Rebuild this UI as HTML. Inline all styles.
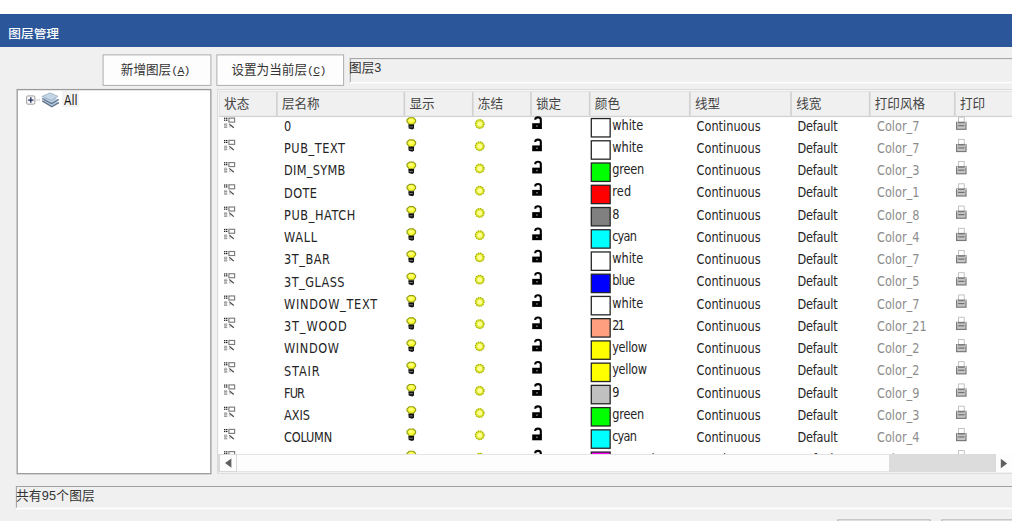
<!DOCTYPE html><html lang="zh-CN"><head><meta charset="utf-8"><title>图层管理</title><style>
*{box-sizing:border-box;margin:0;padding:0}
html,body{width:1012px;height:521px;overflow:hidden;background:#fff}
body{position:relative;font-family:"DejaVu Sans Condensed","Liberation Sans","Noto Sans CJK SC",sans-serif;font-size:12.6px;color:#000}
.abs{position:absolute}
.cjk{font-family:"Liberation Sans","Noto Sans CJK SC",sans-serif}
#client{left:0;top:46.6px;width:1012px;height:475px;background:#f0f0f0}
#title{left:0;top:14px;width:1012px;height:32.6px;background:#2b579a}
#title span{position:absolute;left:8.3px;top:1.1px;line-height:38.5px;color:#fff;font-size:12.7px;font-weight:500;white-space:nowrap;transform:scaleY(0.93);transform-origin:0 50%}
.btn{color:#333;text-align:center;white-space:nowrap;font-size:12.6px}
.btn .m{font-family:"Liberation Mono","DejaVu Sans Mono",monospace;font-size:11.6px;letter-spacing:-0.75px;margin-right:0.75px}
.sunk{white-space:nowrap;color:#333;padding:1px 0 0 1px}
.panel{background:#fff;border:1.2px solid #9c9c9c}
.hd{position:absolute;top:-1px;height:24.8px;line-height:27.4px;font-size:12.6px;color:#444;white-space:nowrap;padding-left:5px}
.row{position:absolute;left:0;width:900px;height:22.235px}
.c{position:absolute;top:-1px;line-height:22.22px;white-space:nowrap;font-size:12.6px;color:#242424;transform:scaleY(1.06);transform-origin:0 50%}
.c.lc{transform:scaleY(1.05);transform-origin:0 68%;top:-1.1px}
.c.hi{top:-2.1px}
.sw{position:absolute;left:372px;transform:translateX(0.65px);top:1.3px;width:20.1px;height:19.7px;border:1.2px solid #2a2a2a}
.ico{position:absolute;overflow:visible}
</style></head><body>
<div id="title" class="abs cjk"><span>图层管理</span></div>
<div id="client" class="abs"></div>
<svg class="abs" style="left:0;top:0" width="1012" height="521" viewBox="0 0 1012 521"><rect x="103.1" y="54.9" width="107.80" height="30.50" fill="#fdfdfd" stroke="#adadad" stroke-width="1"/><rect x="216.9" y="54.9" width="126.70" height="30.50" fill="#fdfdfd" stroke="#adadad" stroke-width="1"/><rect x="17.2" y="89.6" width="193.65" height="384.10" fill="#fff" stroke="#9b9b9b" stroke-width="1.3"/><rect x="217.7" y="89.7" width="812.30" height="383.50" fill="#fff" stroke="#d4d4d4" stroke-width="1"/><path d="M349.8 58.6L1012 58.6" stroke="#a0a0a0" stroke-width="1"/><path d="M350.3 58.1L350.3 83.1" stroke="#a0a0a0" stroke-width="1"/><path d="M349.8 82.7L1012 82.7" stroke="#fff" stroke-width="1.2"/><path d="M15.9 486.5L1012 486.5" stroke="#a0a0a0" stroke-width="1"/><path d="M16.4 486L16.4 509" stroke="#a0a0a0" stroke-width="1"/><path d="M15.9 508.5L1012 508.5" stroke="#fff" stroke-width="1.3"/><rect x="837.9" y="519.9" width="92.20" height="32.10" fill="#fdfdfd" stroke="#adadad" stroke-width="1"/><rect x="941.9" y="519.9" width="98.10" height="32.10" fill="#fdfdfd" stroke="#adadad" stroke-width="1"/></svg>
<div class="abs btn cjk" style="left:102.6px;top:54.6px;width:108.6px;height:31.6px;line-height:31px;padding-right:2.4px">新增图层<span class="m">(<u>A</u>)</span></div>
<div class="abs btn cjk" style="left:216.4px;top:54.6px;width:127.4px;height:31.6px;line-height:31px;padding-right:2.4px">设置为当前层<span class="m">(<u>C</u>)</span></div>
<div class="abs sunk cjk" style="left:349.8px;top:58.2px;width:700px;height:24.8px;line-height:19.3px;font-size:12.6px;padding-left:0px;text-indent:-0.7px">图层3</div>
<svg class="abs" style="left:25px;top:92px" width="37" height="17" viewBox="0 0 37 17"><rect x="1.6" y="3.9" width="8.3" height="8.3" rx="1.2" fill="#f6f6f8" stroke="#9c9c9c" stroke-width="0.95"/><path d="M3.1 8.05H8.5M5.8 5.35V10.75" stroke="#222e5c" stroke-width="1.35"/><path d="M11.6 8H15.2" stroke="#9a9a9a" stroke-width="1" stroke-dasharray="1 1"/><path d="M17.2 8.9 L25.2 5.6 L33.9 10.4 L26.8 14.7Z" fill="#b7cbdf"/><path d="M17.2 8.9 L26.8 14.7 L33.9 10.6" fill="none" stroke="#5d7187" stroke-width="1.3" stroke-linejoin="round"/><path d="M17.2 6.4 L25.2 2.8 L33.9 7.4 L26.5 11.6Z" fill="#bccfe2" stroke="#fff" stroke-width="0.5"/><path d="M17.2 6.5 L26.5 11.6 L33.9 7.5" fill="none" stroke="#61758b" stroke-width="1.3" stroke-linejoin="round"/><path d="M16.8 4.6 L24.9 0.9 L32.9 4.3 L26.4 8.3Z" fill="#c4d5e6" stroke="#8ea4bb" stroke-width="0.7" stroke-linejoin="round"/></svg>
<div class="abs" style="left:61.7px;top:91.2px;width:17.8px;height:16.2px;background:#f2f2f2"></div>
<div class="abs" style="left:63.6px;top:89.2px;line-height:21px;font-size:12.6px;color:#111;transform:scale(0.96,1.14);transform-origin:0 50%">All</div>
<div class="abs" id="tbl" style="left:218.0px;top:90.5px;width:794px;height:363.7px;overflow:hidden">
<div class="abs cjk" style="left:1.2px;top:0.6px;width:900px;height:25.9px;background:#f0f0f0;border-top:1px solid #e3e3e3;border-left:1px solid #e3e3e3">
<div class="hd" style="left:0.0px;width:57.2px;padding-left:3.9px">状态</div>
<div class="hd" style="left:57.2px;width:127.5px;padding-left:4.5px">层名称</div>
<div class="hd" style="left:184.8px;width:68.4px;padding-left:4.5px">显示</div>
<div class="hd" style="left:253.1px;width:58.2px;padding-left:4.5px">冻结</div>
<div class="hd" style="left:311.3px;width:58.7px;padding-left:4.5px">锁定</div>
<div class="hd" style="left:370.1px;width:100.2px;padding-left:4.5px">颜色</div>
<div class="hd" style="left:470.2px;width:101.2px;padding-left:4.5px">线型</div>
<div class="hd" style="left:571.5px;width:78.6px;padding-left:4.5px">线宽</div>
<div class="hd" style="left:650.0px;width:85.1px;padding-left:4.5px">打印风格</div>
<div class="hd" style="left:735.2px;width:145.3px;padding-left:4.5px">打印</div>
</div>
<svg class="abs" style="left:0;top:0" width="794" height="28" viewBox="0 0 794 28"><rect x="1.20" y="24.75" width="800" height="1.35" fill="#d3d3d3"/><rect x="58.05" y="1.10" width="1.6" height="23.70" fill="#d0d0d0"/><rect x="185.55" y="1.10" width="1.6" height="23.70" fill="#d0d0d0"/><rect x="253.95" y="1.10" width="1.6" height="23.70" fill="#d0d0d0"/><rect x="312.15" y="1.10" width="1.6" height="23.70" fill="#d0d0d0"/><rect x="370.85" y="1.10" width="1.6" height="23.70" fill="#d0d0d0"/><rect x="471.05" y="1.10" width="1.6" height="23.70" fill="#d0d0d0"/><rect x="572.25" y="1.10" width="1.6" height="23.70" fill="#d0d0d0"/><rect x="650.85" y="1.10" width="1.6" height="23.70" fill="#d0d0d0"/><rect x="735.95" y="1.10" width="1.6" height="23.70" fill="#d0d0d0"/></svg>
<div class="row" style="top:25.5px;transform:translateY(0.70px)">
<svg class="ico" style="left:6px;top:1.2px" width="12" height="11" viewBox="0 0 12 11"><rect x="0" y="0" width="1.4" height="1.2" fill="#222"/><rect x="2" y="0" width="1.4" height="1.2" fill="#222"/><rect x="0" y="1.9" width="1.4" height="1.2" fill="#222"/><rect x="2" y="1.9" width="1.4" height="1.2" fill="#222"/><rect x="4.9" y="0.4" width="5.7" height="4" fill="#fff" stroke="#7c7c7c" stroke-width="1.15"/><rect x="0" y="5.4" width="3.2" height="4.9" fill="#c6c6c6"/><rect x="0" y="6.6" width="3.2" height="1" fill="#9c9c9c"/><rect x="0" y="9.2" width="3.2" height="1" fill="#9c9c9c"/><path d="M5.2 6.2 L9.8 10" stroke="#4a4a4a" stroke-width="1.25" fill="none"/><path d="M5 6 L7 9.8 L5 9.8Z" fill="#ccc"/></svg><svg class="ico" style="left:187.5px;top:-0.4px" width="12" height="14" viewBox="0 0 12 14"><path d="M3.4 1.0 L7.4 1.0 L9.6 3.1 L9.6 4.9 L7.4 7.6 L3.3 7.6 L1 4.9 L1 3.1Z" fill="#fbfb34" stroke="#929e14" stroke-width="1.15" stroke-linejoin="round"/><ellipse cx="5" cy="3.6" rx="2.3" ry="1.4" fill="#ffff7c"/><path d="M2.3 7.9 L8.1 7.9 L8.0 11.9 L6.2 12.9 L2.7 11.9Z" fill="#141414"/><rect x="3.4" y="9.8" width="3.4" height="0.8" fill="#8c8c8c"/></svg><svg class="ico" style="left:256.2px;top:1.5px" width="12" height="12" viewBox="0 0 12 12"><circle cx="5.7" cy="5.3" r="4.7" fill="#dde626"/><circle cx="5.7" cy="5.3" r="4.3" fill="none" stroke="#9aa51c" stroke-width="1.2" stroke-dasharray="1.1 1.15"/><circle cx="5.7" cy="5.3" r="2.5" fill="#ffff96"/></svg><svg class="ico" style="left:314px;top:-1.0px" width="11" height="14" viewBox="0 0 11 14"><path d="M3.3 4.1 L3.3 3.4 C3.5 1.1, 8.5 0.9, 8.8 3.8 L8.8 8" stroke="#000" stroke-width="2.1" fill="none"/><rect x="0.2" y="7.5" width="9.7" height="5.8" fill="#000"/><rect x="4.2" y="9.6" width="1.5" height="1.5" fill="#8a8a8a"/></svg>
<div class="c" style="left:66px">0</div>
<svg class="ico" style="left:372px;top:0" width="22" height="22" viewBox="0 0 22 22"><rect x="1.3" y="1.85" width="18.85" height="18.4" fill="#ffffff" stroke="#262626" stroke-width="1.3"/></svg>
<div class="c lc hi" style="left:394.2px">white</div>
<div class="c lc" style="left:478.6px">Continuous</div>
<div class="c lc" style="left:579.6px;letter-spacing:-0.22px">Default</div>
<div class="c lc" style="left:659px;color:#8c8c8c">Color_7</div>
<svg class="ico" style="left:738px;top:0.3px" width="12" height="14" viewBox="0 0 12 14"><rect x="2.6" y="0.4" width="5.6" height="5.4" fill="#fff" stroke="#b4b4b4" stroke-width="0.8"/><rect x="0" y="5.0" width="10.6" height="8.2" fill="#7a7a7a"/><rect x="1.2" y="6.6" width="8.2" height="5.4" fill="#c6c6c6"/><rect x="2.2" y="8.4" width="6.2" height="1.2" fill="#6e6e6e"/><rect x="0.9" y="5.6" width="1" height="1" fill="#fff"/><rect x="8.8" y="5.6" width="1" height="1" fill="#fff"/></svg>
</div>
<div class="row" style="top:47.5px;transform:translateY(0.94px)">
<svg class="ico" style="left:6px;top:1.2px" width="12" height="11" viewBox="0 0 12 11"><rect x="0" y="0" width="1.4" height="1.2" fill="#222"/><rect x="2" y="0" width="1.4" height="1.2" fill="#222"/><rect x="0" y="1.9" width="1.4" height="1.2" fill="#222"/><rect x="2" y="1.9" width="1.4" height="1.2" fill="#222"/><rect x="4.9" y="0.4" width="5.7" height="4" fill="#fff" stroke="#7c7c7c" stroke-width="1.15"/><rect x="0" y="5.4" width="3.2" height="4.9" fill="#c6c6c6"/><rect x="0" y="6.6" width="3.2" height="1" fill="#9c9c9c"/><rect x="0" y="9.2" width="3.2" height="1" fill="#9c9c9c"/><path d="M5.2 6.2 L9.8 10" stroke="#4a4a4a" stroke-width="1.25" fill="none"/><path d="M5 6 L7 9.8 L5 9.8Z" fill="#ccc"/></svg><svg class="ico" style="left:187.5px;top:-0.4px" width="12" height="14" viewBox="0 0 12 14"><path d="M3.4 1.0 L7.4 1.0 L9.6 3.1 L9.6 4.9 L7.4 7.6 L3.3 7.6 L1 4.9 L1 3.1Z" fill="#fbfb34" stroke="#929e14" stroke-width="1.15" stroke-linejoin="round"/><ellipse cx="5" cy="3.6" rx="2.3" ry="1.4" fill="#ffff7c"/><path d="M2.3 7.9 L8.1 7.9 L8.0 11.9 L6.2 12.9 L2.7 11.9Z" fill="#141414"/><rect x="3.4" y="9.8" width="3.4" height="0.8" fill="#8c8c8c"/></svg><svg class="ico" style="left:256.2px;top:1.5px" width="12" height="12" viewBox="0 0 12 12"><circle cx="5.7" cy="5.3" r="4.7" fill="#dde626"/><circle cx="5.7" cy="5.3" r="4.3" fill="none" stroke="#9aa51c" stroke-width="1.2" stroke-dasharray="1.1 1.15"/><circle cx="5.7" cy="5.3" r="2.5" fill="#ffff96"/></svg><svg class="ico" style="left:314px;top:-1.0px" width="11" height="14" viewBox="0 0 11 14"><path d="M3.3 4.1 L3.3 3.4 C3.5 1.1, 8.5 0.9, 8.8 3.8 L8.8 8" stroke="#000" stroke-width="2.1" fill="none"/><rect x="0.2" y="7.5" width="9.7" height="5.8" fill="#000"/><rect x="4.2" y="9.6" width="1.5" height="1.5" fill="#8a8a8a"/></svg>
<div class="c" style="left:66px;letter-spacing:0.54px">PUB_TEXT</div>
<svg class="ico" style="left:372px;top:0" width="22" height="22" viewBox="0 0 22 22"><rect x="1.3" y="1.85" width="18.85" height="18.4" fill="#ffffff" stroke="#262626" stroke-width="1.3"/></svg>
<div class="c lc hi" style="left:394.2px">white</div>
<div class="c lc" style="left:478.6px">Continuous</div>
<div class="c lc" style="left:579.6px;letter-spacing:-0.22px">Default</div>
<div class="c lc" style="left:659px;color:#8c8c8c">Color_7</div>
<svg class="ico" style="left:738px;top:0.3px" width="12" height="14" viewBox="0 0 12 14"><rect x="2.6" y="0.4" width="5.6" height="5.4" fill="#fff" stroke="#b4b4b4" stroke-width="0.8"/><rect x="0" y="5.0" width="10.6" height="8.2" fill="#7a7a7a"/><rect x="1.2" y="6.6" width="8.2" height="5.4" fill="#c6c6c6"/><rect x="2.2" y="8.4" width="6.2" height="1.2" fill="#6e6e6e"/><rect x="0.9" y="5.6" width="1" height="1" fill="#fff"/><rect x="8.8" y="5.6" width="1" height="1" fill="#fff"/></svg>
</div>
<div class="row" style="top:70.5px;transform:translateY(0.17px)">
<svg class="ico" style="left:6px;top:1.2px" width="12" height="11" viewBox="0 0 12 11"><rect x="0" y="0" width="1.4" height="1.2" fill="#222"/><rect x="2" y="0" width="1.4" height="1.2" fill="#222"/><rect x="0" y="1.9" width="1.4" height="1.2" fill="#222"/><rect x="2" y="1.9" width="1.4" height="1.2" fill="#222"/><rect x="4.9" y="0.4" width="5.7" height="4" fill="#fff" stroke="#7c7c7c" stroke-width="1.15"/><rect x="0" y="5.4" width="3.2" height="4.9" fill="#c6c6c6"/><rect x="0" y="6.6" width="3.2" height="1" fill="#9c9c9c"/><rect x="0" y="9.2" width="3.2" height="1" fill="#9c9c9c"/><path d="M5.2 6.2 L9.8 10" stroke="#4a4a4a" stroke-width="1.25" fill="none"/><path d="M5 6 L7 9.8 L5 9.8Z" fill="#ccc"/></svg><svg class="ico" style="left:187.5px;top:-0.4px" width="12" height="14" viewBox="0 0 12 14"><path d="M3.4 1.0 L7.4 1.0 L9.6 3.1 L9.6 4.9 L7.4 7.6 L3.3 7.6 L1 4.9 L1 3.1Z" fill="#fbfb34" stroke="#929e14" stroke-width="1.15" stroke-linejoin="round"/><ellipse cx="5" cy="3.6" rx="2.3" ry="1.4" fill="#ffff7c"/><path d="M2.3 7.9 L8.1 7.9 L8.0 11.9 L6.2 12.9 L2.7 11.9Z" fill="#141414"/><rect x="3.4" y="9.8" width="3.4" height="0.8" fill="#8c8c8c"/></svg><svg class="ico" style="left:256.2px;top:1.5px" width="12" height="12" viewBox="0 0 12 12"><circle cx="5.7" cy="5.3" r="4.7" fill="#dde626"/><circle cx="5.7" cy="5.3" r="4.3" fill="none" stroke="#9aa51c" stroke-width="1.2" stroke-dasharray="1.1 1.15"/><circle cx="5.7" cy="5.3" r="2.5" fill="#ffff96"/></svg><svg class="ico" style="left:314px;top:-1.0px" width="11" height="14" viewBox="0 0 11 14"><path d="M3.3 4.1 L3.3 3.4 C3.5 1.1, 8.5 0.9, 8.8 3.8 L8.8 8" stroke="#000" stroke-width="2.1" fill="none"/><rect x="0.2" y="7.5" width="9.7" height="5.8" fill="#000"/><rect x="4.2" y="9.6" width="1.5" height="1.5" fill="#8a8a8a"/></svg>
<div class="c" style="left:66px;letter-spacing:0.31px">DIM_SYMB</div>
<svg class="ico" style="left:372px;top:0" width="22" height="22" viewBox="0 0 22 22"><rect x="1.3" y="1.85" width="18.85" height="18.4" fill="#00ff00" stroke="#262626" stroke-width="1.3"/></svg>
<div class="c lc hi" style="left:394.2px;letter-spacing:-0.18px">green</div>
<div class="c lc" style="left:478.6px">Continuous</div>
<div class="c lc" style="left:579.6px;letter-spacing:-0.22px">Default</div>
<div class="c lc" style="left:659px;color:#8c8c8c">Color_3</div>
<svg class="ico" style="left:738px;top:0.3px" width="12" height="14" viewBox="0 0 12 14"><rect x="2.6" y="0.4" width="5.6" height="5.4" fill="#fff" stroke="#b4b4b4" stroke-width="0.8"/><rect x="0" y="5.0" width="10.6" height="8.2" fill="#7a7a7a"/><rect x="1.2" y="6.6" width="8.2" height="5.4" fill="#c6c6c6"/><rect x="2.2" y="8.4" width="6.2" height="1.2" fill="#6e6e6e"/><rect x="0.9" y="5.6" width="1" height="1" fill="#fff"/><rect x="8.8" y="5.6" width="1" height="1" fill="#fff"/></svg>
</div>
<div class="row" style="top:92.5px;transform:translateY(0.41px)">
<svg class="ico" style="left:6px;top:1.2px" width="12" height="11" viewBox="0 0 12 11"><rect x="0" y="0" width="1.4" height="1.2" fill="#222"/><rect x="2" y="0" width="1.4" height="1.2" fill="#222"/><rect x="0" y="1.9" width="1.4" height="1.2" fill="#222"/><rect x="2" y="1.9" width="1.4" height="1.2" fill="#222"/><rect x="4.9" y="0.4" width="5.7" height="4" fill="#fff" stroke="#7c7c7c" stroke-width="1.15"/><rect x="0" y="5.4" width="3.2" height="4.9" fill="#c6c6c6"/><rect x="0" y="6.6" width="3.2" height="1" fill="#9c9c9c"/><rect x="0" y="9.2" width="3.2" height="1" fill="#9c9c9c"/><path d="M5.2 6.2 L9.8 10" stroke="#4a4a4a" stroke-width="1.25" fill="none"/><path d="M5 6 L7 9.8 L5 9.8Z" fill="#ccc"/></svg><svg class="ico" style="left:187.5px;top:-0.4px" width="12" height="14" viewBox="0 0 12 14"><path d="M3.4 1.0 L7.4 1.0 L9.6 3.1 L9.6 4.9 L7.4 7.6 L3.3 7.6 L1 4.9 L1 3.1Z" fill="#fbfb34" stroke="#929e14" stroke-width="1.15" stroke-linejoin="round"/><ellipse cx="5" cy="3.6" rx="2.3" ry="1.4" fill="#ffff7c"/><path d="M2.3 7.9 L8.1 7.9 L8.0 11.9 L6.2 12.9 L2.7 11.9Z" fill="#141414"/><rect x="3.4" y="9.8" width="3.4" height="0.8" fill="#8c8c8c"/></svg><svg class="ico" style="left:256.2px;top:1.5px" width="12" height="12" viewBox="0 0 12 12"><circle cx="5.7" cy="5.3" r="4.7" fill="#dde626"/><circle cx="5.7" cy="5.3" r="4.3" fill="none" stroke="#9aa51c" stroke-width="1.2" stroke-dasharray="1.1 1.15"/><circle cx="5.7" cy="5.3" r="2.5" fill="#ffff96"/></svg><svg class="ico" style="left:314px;top:-1.0px" width="11" height="14" viewBox="0 0 11 14"><path d="M3.3 4.1 L3.3 3.4 C3.5 1.1, 8.5 0.9, 8.8 3.8 L8.8 8" stroke="#000" stroke-width="2.1" fill="none"/><rect x="0.2" y="7.5" width="9.7" height="5.8" fill="#000"/><rect x="4.2" y="9.6" width="1.5" height="1.5" fill="#8a8a8a"/></svg>
<div class="c" style="left:66px;letter-spacing:0.4px">DOTE</div>
<svg class="ico" style="left:372px;top:0" width="22" height="22" viewBox="0 0 22 22"><rect x="1.3" y="1.85" width="18.85" height="18.4" fill="#ff0000" stroke="#262626" stroke-width="1.3"/></svg>
<div class="c lc hi" style="left:394.2px;letter-spacing:0.25px">red</div>
<div class="c lc" style="left:478.6px">Continuous</div>
<div class="c lc" style="left:579.6px;letter-spacing:-0.22px">Default</div>
<div class="c lc" style="left:659px;color:#8c8c8c">Color_1</div>
<svg class="ico" style="left:738px;top:0.3px" width="12" height="14" viewBox="0 0 12 14"><rect x="2.6" y="0.4" width="5.6" height="5.4" fill="#fff" stroke="#b4b4b4" stroke-width="0.8"/><rect x="0" y="5.0" width="10.6" height="8.2" fill="#7a7a7a"/><rect x="1.2" y="6.6" width="8.2" height="5.4" fill="#c6c6c6"/><rect x="2.2" y="8.4" width="6.2" height="1.2" fill="#6e6e6e"/><rect x="0.9" y="5.6" width="1" height="1" fill="#fff"/><rect x="8.8" y="5.6" width="1" height="1" fill="#fff"/></svg>
</div>
<div class="row" style="top:114.5px;transform:translateY(0.64px)">
<svg class="ico" style="left:6px;top:1.2px" width="12" height="11" viewBox="0 0 12 11"><rect x="0" y="0" width="1.4" height="1.2" fill="#222"/><rect x="2" y="0" width="1.4" height="1.2" fill="#222"/><rect x="0" y="1.9" width="1.4" height="1.2" fill="#222"/><rect x="2" y="1.9" width="1.4" height="1.2" fill="#222"/><rect x="4.9" y="0.4" width="5.7" height="4" fill="#fff" stroke="#7c7c7c" stroke-width="1.15"/><rect x="0" y="5.4" width="3.2" height="4.9" fill="#c6c6c6"/><rect x="0" y="6.6" width="3.2" height="1" fill="#9c9c9c"/><rect x="0" y="9.2" width="3.2" height="1" fill="#9c9c9c"/><path d="M5.2 6.2 L9.8 10" stroke="#4a4a4a" stroke-width="1.25" fill="none"/><path d="M5 6 L7 9.8 L5 9.8Z" fill="#ccc"/></svg><svg class="ico" style="left:187.5px;top:-0.4px" width="12" height="14" viewBox="0 0 12 14"><path d="M3.4 1.0 L7.4 1.0 L9.6 3.1 L9.6 4.9 L7.4 7.6 L3.3 7.6 L1 4.9 L1 3.1Z" fill="#fbfb34" stroke="#929e14" stroke-width="1.15" stroke-linejoin="round"/><ellipse cx="5" cy="3.6" rx="2.3" ry="1.4" fill="#ffff7c"/><path d="M2.3 7.9 L8.1 7.9 L8.0 11.9 L6.2 12.9 L2.7 11.9Z" fill="#141414"/><rect x="3.4" y="9.8" width="3.4" height="0.8" fill="#8c8c8c"/></svg><svg class="ico" style="left:256.2px;top:1.5px" width="12" height="12" viewBox="0 0 12 12"><circle cx="5.7" cy="5.3" r="4.7" fill="#dde626"/><circle cx="5.7" cy="5.3" r="4.3" fill="none" stroke="#9aa51c" stroke-width="1.2" stroke-dasharray="1.1 1.15"/><circle cx="5.7" cy="5.3" r="2.5" fill="#ffff96"/></svg><svg class="ico" style="left:314px;top:-1.0px" width="11" height="14" viewBox="0 0 11 14"><path d="M3.3 4.1 L3.3 3.4 C3.5 1.1, 8.5 0.9, 8.8 3.8 L8.8 8" stroke="#000" stroke-width="2.1" fill="none"/><rect x="0.2" y="7.5" width="9.7" height="5.8" fill="#000"/><rect x="4.2" y="9.6" width="1.5" height="1.5" fill="#8a8a8a"/></svg>
<div class="c" style="left:66px;letter-spacing:0.6px">PUB_HATCH</div>
<svg class="ico" style="left:372px;top:0" width="22" height="22" viewBox="0 0 22 22"><rect x="1.3" y="1.85" width="18.85" height="18.4" fill="#808080" stroke="#262626" stroke-width="1.3"/></svg>
<div class="c lc hi" style="left:394.2px">8</div>
<div class="c lc" style="left:478.6px">Continuous</div>
<div class="c lc" style="left:579.6px;letter-spacing:-0.22px">Default</div>
<div class="c lc" style="left:659px;color:#8c8c8c">Color_8</div>
<svg class="ico" style="left:738px;top:0.3px" width="12" height="14" viewBox="0 0 12 14"><rect x="2.6" y="0.4" width="5.6" height="5.4" fill="#fff" stroke="#b4b4b4" stroke-width="0.8"/><rect x="0" y="5.0" width="10.6" height="8.2" fill="#7a7a7a"/><rect x="1.2" y="6.6" width="8.2" height="5.4" fill="#c6c6c6"/><rect x="2.2" y="8.4" width="6.2" height="1.2" fill="#6e6e6e"/><rect x="0.9" y="5.6" width="1" height="1" fill="#fff"/><rect x="8.8" y="5.6" width="1" height="1" fill="#fff"/></svg>
</div>
<div class="row" style="top:136.5px;transform:translateY(0.88px)">
<svg class="ico" style="left:6px;top:1.2px" width="12" height="11" viewBox="0 0 12 11"><rect x="0" y="0" width="1.4" height="1.2" fill="#222"/><rect x="2" y="0" width="1.4" height="1.2" fill="#222"/><rect x="0" y="1.9" width="1.4" height="1.2" fill="#222"/><rect x="2" y="1.9" width="1.4" height="1.2" fill="#222"/><rect x="4.9" y="0.4" width="5.7" height="4" fill="#fff" stroke="#7c7c7c" stroke-width="1.15"/><rect x="0" y="5.4" width="3.2" height="4.9" fill="#c6c6c6"/><rect x="0" y="6.6" width="3.2" height="1" fill="#9c9c9c"/><rect x="0" y="9.2" width="3.2" height="1" fill="#9c9c9c"/><path d="M5.2 6.2 L9.8 10" stroke="#4a4a4a" stroke-width="1.25" fill="none"/><path d="M5 6 L7 9.8 L5 9.8Z" fill="#ccc"/></svg><svg class="ico" style="left:187.5px;top:-0.4px" width="12" height="14" viewBox="0 0 12 14"><path d="M3.4 1.0 L7.4 1.0 L9.6 3.1 L9.6 4.9 L7.4 7.6 L3.3 7.6 L1 4.9 L1 3.1Z" fill="#fbfb34" stroke="#929e14" stroke-width="1.15" stroke-linejoin="round"/><ellipse cx="5" cy="3.6" rx="2.3" ry="1.4" fill="#ffff7c"/><path d="M2.3 7.9 L8.1 7.9 L8.0 11.9 L6.2 12.9 L2.7 11.9Z" fill="#141414"/><rect x="3.4" y="9.8" width="3.4" height="0.8" fill="#8c8c8c"/></svg><svg class="ico" style="left:256.2px;top:1.5px" width="12" height="12" viewBox="0 0 12 12"><circle cx="5.7" cy="5.3" r="4.7" fill="#dde626"/><circle cx="5.7" cy="5.3" r="4.3" fill="none" stroke="#9aa51c" stroke-width="1.2" stroke-dasharray="1.1 1.15"/><circle cx="5.7" cy="5.3" r="2.5" fill="#ffff96"/></svg><svg class="ico" style="left:314px;top:-1.0px" width="11" height="14" viewBox="0 0 11 14"><path d="M3.3 4.1 L3.3 3.4 C3.5 1.1, 8.5 0.9, 8.8 3.8 L8.8 8" stroke="#000" stroke-width="2.1" fill="none"/><rect x="0.2" y="7.5" width="9.7" height="5.8" fill="#000"/><rect x="4.2" y="9.6" width="1.5" height="1.5" fill="#8a8a8a"/></svg>
<div class="c" style="left:66px;letter-spacing:0.73px">WALL</div>
<svg class="ico" style="left:372px;top:0" width="22" height="22" viewBox="0 0 22 22"><rect x="1.3" y="1.85" width="18.85" height="18.4" fill="#00ffff" stroke="#262626" stroke-width="1.3"/></svg>
<div class="c lc hi" style="left:394.2px;letter-spacing:-0.8px">cyan</div>
<div class="c lc" style="left:478.6px">Continuous</div>
<div class="c lc" style="left:579.6px;letter-spacing:-0.22px">Default</div>
<div class="c lc" style="left:659px;color:#8c8c8c">Color_4</div>
<svg class="ico" style="left:738px;top:0.3px" width="12" height="14" viewBox="0 0 12 14"><rect x="2.6" y="0.4" width="5.6" height="5.4" fill="#fff" stroke="#b4b4b4" stroke-width="0.8"/><rect x="0" y="5.0" width="10.6" height="8.2" fill="#7a7a7a"/><rect x="1.2" y="6.6" width="8.2" height="5.4" fill="#c6c6c6"/><rect x="2.2" y="8.4" width="6.2" height="1.2" fill="#6e6e6e"/><rect x="0.9" y="5.6" width="1" height="1" fill="#fff"/><rect x="8.8" y="5.6" width="1" height="1" fill="#fff"/></svg>
</div>
<div class="row" style="top:159.5px;transform:translateY(0.11px)">
<svg class="ico" style="left:6px;top:1.2px" width="12" height="11" viewBox="0 0 12 11"><rect x="0" y="0" width="1.4" height="1.2" fill="#222"/><rect x="2" y="0" width="1.4" height="1.2" fill="#222"/><rect x="0" y="1.9" width="1.4" height="1.2" fill="#222"/><rect x="2" y="1.9" width="1.4" height="1.2" fill="#222"/><rect x="4.9" y="0.4" width="5.7" height="4" fill="#fff" stroke="#7c7c7c" stroke-width="1.15"/><rect x="0" y="5.4" width="3.2" height="4.9" fill="#c6c6c6"/><rect x="0" y="6.6" width="3.2" height="1" fill="#9c9c9c"/><rect x="0" y="9.2" width="3.2" height="1" fill="#9c9c9c"/><path d="M5.2 6.2 L9.8 10" stroke="#4a4a4a" stroke-width="1.25" fill="none"/><path d="M5 6 L7 9.8 L5 9.8Z" fill="#ccc"/></svg><svg class="ico" style="left:187.5px;top:-0.4px" width="12" height="14" viewBox="0 0 12 14"><path d="M3.4 1.0 L7.4 1.0 L9.6 3.1 L9.6 4.9 L7.4 7.6 L3.3 7.6 L1 4.9 L1 3.1Z" fill="#fbfb34" stroke="#929e14" stroke-width="1.15" stroke-linejoin="round"/><ellipse cx="5" cy="3.6" rx="2.3" ry="1.4" fill="#ffff7c"/><path d="M2.3 7.9 L8.1 7.9 L8.0 11.9 L6.2 12.9 L2.7 11.9Z" fill="#141414"/><rect x="3.4" y="9.8" width="3.4" height="0.8" fill="#8c8c8c"/></svg><svg class="ico" style="left:256.2px;top:1.5px" width="12" height="12" viewBox="0 0 12 12"><circle cx="5.7" cy="5.3" r="4.7" fill="#dde626"/><circle cx="5.7" cy="5.3" r="4.3" fill="none" stroke="#9aa51c" stroke-width="1.2" stroke-dasharray="1.1 1.15"/><circle cx="5.7" cy="5.3" r="2.5" fill="#ffff96"/></svg><svg class="ico" style="left:314px;top:-1.0px" width="11" height="14" viewBox="0 0 11 14"><path d="M3.3 4.1 L3.3 3.4 C3.5 1.1, 8.5 0.9, 8.8 3.8 L8.8 8" stroke="#000" stroke-width="2.1" fill="none"/><rect x="0.2" y="7.5" width="9.7" height="5.8" fill="#000"/><rect x="4.2" y="9.6" width="1.5" height="1.5" fill="#8a8a8a"/></svg>
<div class="c" style="left:66px;letter-spacing:0.56px">3T_BAR</div>
<svg class="ico" style="left:372px;top:0" width="22" height="22" viewBox="0 0 22 22"><rect x="1.3" y="1.85" width="18.85" height="18.4" fill="#ffffff" stroke="#262626" stroke-width="1.3"/></svg>
<div class="c lc hi" style="left:394.2px">white</div>
<div class="c lc" style="left:478.6px">Continuous</div>
<div class="c lc" style="left:579.6px;letter-spacing:-0.22px">Default</div>
<div class="c lc" style="left:659px;color:#8c8c8c">Color_7</div>
<svg class="ico" style="left:738px;top:0.3px" width="12" height="14" viewBox="0 0 12 14"><rect x="2.6" y="0.4" width="5.6" height="5.4" fill="#fff" stroke="#b4b4b4" stroke-width="0.8"/><rect x="0" y="5.0" width="10.6" height="8.2" fill="#7a7a7a"/><rect x="1.2" y="6.6" width="8.2" height="5.4" fill="#c6c6c6"/><rect x="2.2" y="8.4" width="6.2" height="1.2" fill="#6e6e6e"/><rect x="0.9" y="5.6" width="1" height="1" fill="#fff"/><rect x="8.8" y="5.6" width="1" height="1" fill="#fff"/></svg>
</div>
<div class="row" style="top:181.5px;transform:translateY(0.34px)">
<svg class="ico" style="left:6px;top:1.2px" width="12" height="11" viewBox="0 0 12 11"><rect x="0" y="0" width="1.4" height="1.2" fill="#222"/><rect x="2" y="0" width="1.4" height="1.2" fill="#222"/><rect x="0" y="1.9" width="1.4" height="1.2" fill="#222"/><rect x="2" y="1.9" width="1.4" height="1.2" fill="#222"/><rect x="4.9" y="0.4" width="5.7" height="4" fill="#fff" stroke="#7c7c7c" stroke-width="1.15"/><rect x="0" y="5.4" width="3.2" height="4.9" fill="#c6c6c6"/><rect x="0" y="6.6" width="3.2" height="1" fill="#9c9c9c"/><rect x="0" y="9.2" width="3.2" height="1" fill="#9c9c9c"/><path d="M5.2 6.2 L9.8 10" stroke="#4a4a4a" stroke-width="1.25" fill="none"/><path d="M5 6 L7 9.8 L5 9.8Z" fill="#ccc"/></svg><svg class="ico" style="left:187.5px;top:-0.4px" width="12" height="14" viewBox="0 0 12 14"><path d="M3.4 1.0 L7.4 1.0 L9.6 3.1 L9.6 4.9 L7.4 7.6 L3.3 7.6 L1 4.9 L1 3.1Z" fill="#fbfb34" stroke="#929e14" stroke-width="1.15" stroke-linejoin="round"/><ellipse cx="5" cy="3.6" rx="2.3" ry="1.4" fill="#ffff7c"/><path d="M2.3 7.9 L8.1 7.9 L8.0 11.9 L6.2 12.9 L2.7 11.9Z" fill="#141414"/><rect x="3.4" y="9.8" width="3.4" height="0.8" fill="#8c8c8c"/></svg><svg class="ico" style="left:256.2px;top:1.5px" width="12" height="12" viewBox="0 0 12 12"><circle cx="5.7" cy="5.3" r="4.7" fill="#dde626"/><circle cx="5.7" cy="5.3" r="4.3" fill="none" stroke="#9aa51c" stroke-width="1.2" stroke-dasharray="1.1 1.15"/><circle cx="5.7" cy="5.3" r="2.5" fill="#ffff96"/></svg><svg class="ico" style="left:314px;top:-1.0px" width="11" height="14" viewBox="0 0 11 14"><path d="M3.3 4.1 L3.3 3.4 C3.5 1.1, 8.5 0.9, 8.8 3.8 L8.8 8" stroke="#000" stroke-width="2.1" fill="none"/><rect x="0.2" y="7.5" width="9.7" height="5.8" fill="#000"/><rect x="4.2" y="9.6" width="1.5" height="1.5" fill="#8a8a8a"/></svg>
<div class="c" style="left:66px;letter-spacing:0.46px">3T_GLASS</div>
<svg class="ico" style="left:372px;top:0" width="22" height="22" viewBox="0 0 22 22"><rect x="1.3" y="1.85" width="18.85" height="18.4" fill="#0000ff" stroke="#262626" stroke-width="1.3"/></svg>
<div class="c lc hi" style="left:394.2px;letter-spacing:-0.53px">blue</div>
<div class="c lc" style="left:478.6px">Continuous</div>
<div class="c lc" style="left:579.6px;letter-spacing:-0.22px">Default</div>
<div class="c lc" style="left:659px;color:#8c8c8c">Color_5</div>
<svg class="ico" style="left:738px;top:0.3px" width="12" height="14" viewBox="0 0 12 14"><rect x="2.6" y="0.4" width="5.6" height="5.4" fill="#fff" stroke="#b4b4b4" stroke-width="0.8"/><rect x="0" y="5.0" width="10.6" height="8.2" fill="#7a7a7a"/><rect x="1.2" y="6.6" width="8.2" height="5.4" fill="#c6c6c6"/><rect x="2.2" y="8.4" width="6.2" height="1.2" fill="#6e6e6e"/><rect x="0.9" y="5.6" width="1" height="1" fill="#fff"/><rect x="8.8" y="5.6" width="1" height="1" fill="#fff"/></svg>
</div>
<div class="row" style="top:203.5px;transform:translateY(0.58px)">
<svg class="ico" style="left:6px;top:1.2px" width="12" height="11" viewBox="0 0 12 11"><rect x="0" y="0" width="1.4" height="1.2" fill="#222"/><rect x="2" y="0" width="1.4" height="1.2" fill="#222"/><rect x="0" y="1.9" width="1.4" height="1.2" fill="#222"/><rect x="2" y="1.9" width="1.4" height="1.2" fill="#222"/><rect x="4.9" y="0.4" width="5.7" height="4" fill="#fff" stroke="#7c7c7c" stroke-width="1.15"/><rect x="0" y="5.4" width="3.2" height="4.9" fill="#c6c6c6"/><rect x="0" y="6.6" width="3.2" height="1" fill="#9c9c9c"/><rect x="0" y="9.2" width="3.2" height="1" fill="#9c9c9c"/><path d="M5.2 6.2 L9.8 10" stroke="#4a4a4a" stroke-width="1.25" fill="none"/><path d="M5 6 L7 9.8 L5 9.8Z" fill="#ccc"/></svg><svg class="ico" style="left:187.5px;top:-0.4px" width="12" height="14" viewBox="0 0 12 14"><path d="M3.4 1.0 L7.4 1.0 L9.6 3.1 L9.6 4.9 L7.4 7.6 L3.3 7.6 L1 4.9 L1 3.1Z" fill="#fbfb34" stroke="#929e14" stroke-width="1.15" stroke-linejoin="round"/><ellipse cx="5" cy="3.6" rx="2.3" ry="1.4" fill="#ffff7c"/><path d="M2.3 7.9 L8.1 7.9 L8.0 11.9 L6.2 12.9 L2.7 11.9Z" fill="#141414"/><rect x="3.4" y="9.8" width="3.4" height="0.8" fill="#8c8c8c"/></svg><svg class="ico" style="left:256.2px;top:1.5px" width="12" height="12" viewBox="0 0 12 12"><circle cx="5.7" cy="5.3" r="4.7" fill="#dde626"/><circle cx="5.7" cy="5.3" r="4.3" fill="none" stroke="#9aa51c" stroke-width="1.2" stroke-dasharray="1.1 1.15"/><circle cx="5.7" cy="5.3" r="2.5" fill="#ffff96"/></svg><svg class="ico" style="left:314px;top:-1.0px" width="11" height="14" viewBox="0 0 11 14"><path d="M3.3 4.1 L3.3 3.4 C3.5 1.1, 8.5 0.9, 8.8 3.8 L8.8 8" stroke="#000" stroke-width="2.1" fill="none"/><rect x="0.2" y="7.5" width="9.7" height="5.8" fill="#000"/><rect x="4.2" y="9.6" width="1.5" height="1.5" fill="#8a8a8a"/></svg>
<div class="c" style="left:66px;letter-spacing:0.71px">WINDOW_TEXT</div>
<svg class="ico" style="left:372px;top:0" width="22" height="22" viewBox="0 0 22 22"><rect x="1.3" y="1.85" width="18.85" height="18.4" fill="#ffffff" stroke="#262626" stroke-width="1.3"/></svg>
<div class="c lc hi" style="left:394.2px">white</div>
<div class="c lc" style="left:478.6px">Continuous</div>
<div class="c lc" style="left:579.6px;letter-spacing:-0.22px">Default</div>
<div class="c lc" style="left:659px;color:#8c8c8c">Color_7</div>
<svg class="ico" style="left:738px;top:0.3px" width="12" height="14" viewBox="0 0 12 14"><rect x="2.6" y="0.4" width="5.6" height="5.4" fill="#fff" stroke="#b4b4b4" stroke-width="0.8"/><rect x="0" y="5.0" width="10.6" height="8.2" fill="#7a7a7a"/><rect x="1.2" y="6.6" width="8.2" height="5.4" fill="#c6c6c6"/><rect x="2.2" y="8.4" width="6.2" height="1.2" fill="#6e6e6e"/><rect x="0.9" y="5.6" width="1" height="1" fill="#fff"/><rect x="8.8" y="5.6" width="1" height="1" fill="#fff"/></svg>
</div>
<div class="row" style="top:225.5px;transform:translateY(0.81px)">
<svg class="ico" style="left:6px;top:1.2px" width="12" height="11" viewBox="0 0 12 11"><rect x="0" y="0" width="1.4" height="1.2" fill="#222"/><rect x="2" y="0" width="1.4" height="1.2" fill="#222"/><rect x="0" y="1.9" width="1.4" height="1.2" fill="#222"/><rect x="2" y="1.9" width="1.4" height="1.2" fill="#222"/><rect x="4.9" y="0.4" width="5.7" height="4" fill="#fff" stroke="#7c7c7c" stroke-width="1.15"/><rect x="0" y="5.4" width="3.2" height="4.9" fill="#c6c6c6"/><rect x="0" y="6.6" width="3.2" height="1" fill="#9c9c9c"/><rect x="0" y="9.2" width="3.2" height="1" fill="#9c9c9c"/><path d="M5.2 6.2 L9.8 10" stroke="#4a4a4a" stroke-width="1.25" fill="none"/><path d="M5 6 L7 9.8 L5 9.8Z" fill="#ccc"/></svg><svg class="ico" style="left:187.5px;top:-0.4px" width="12" height="14" viewBox="0 0 12 14"><path d="M3.4 1.0 L7.4 1.0 L9.6 3.1 L9.6 4.9 L7.4 7.6 L3.3 7.6 L1 4.9 L1 3.1Z" fill="#fbfb34" stroke="#929e14" stroke-width="1.15" stroke-linejoin="round"/><ellipse cx="5" cy="3.6" rx="2.3" ry="1.4" fill="#ffff7c"/><path d="M2.3 7.9 L8.1 7.9 L8.0 11.9 L6.2 12.9 L2.7 11.9Z" fill="#141414"/><rect x="3.4" y="9.8" width="3.4" height="0.8" fill="#8c8c8c"/></svg><svg class="ico" style="left:256.2px;top:1.5px" width="12" height="12" viewBox="0 0 12 12"><circle cx="5.7" cy="5.3" r="4.7" fill="#dde626"/><circle cx="5.7" cy="5.3" r="4.3" fill="none" stroke="#9aa51c" stroke-width="1.2" stroke-dasharray="1.1 1.15"/><circle cx="5.7" cy="5.3" r="2.5" fill="#ffff96"/></svg><svg class="ico" style="left:314px;top:-1.0px" width="11" height="14" viewBox="0 0 11 14"><path d="M3.3 4.1 L3.3 3.4 C3.5 1.1, 8.5 0.9, 8.8 3.8 L8.8 8" stroke="#000" stroke-width="2.1" fill="none"/><rect x="0.2" y="7.5" width="9.7" height="5.8" fill="#000"/><rect x="4.2" y="9.6" width="1.5" height="1.5" fill="#8a8a8a"/></svg>
<div class="c" style="left:66px;letter-spacing:0.87px">3T_WOOD</div>
<svg class="ico" style="left:372px;top:0" width="22" height="22" viewBox="0 0 22 22"><rect x="1.3" y="1.85" width="18.85" height="18.4" fill="#ff9f7f" stroke="#262626" stroke-width="1.3"/></svg>
<div class="c lc hi" style="left:394.2px;letter-spacing:-1.6px">21</div>
<div class="c lc" style="left:478.6px">Continuous</div>
<div class="c lc" style="left:579.6px;letter-spacing:-0.22px">Default</div>
<div class="c lc" style="left:659px;color:#8c8c8c">Color_21</div>
<svg class="ico" style="left:738px;top:0.3px" width="12" height="14" viewBox="0 0 12 14"><rect x="2.6" y="0.4" width="5.6" height="5.4" fill="#fff" stroke="#b4b4b4" stroke-width="0.8"/><rect x="0" y="5.0" width="10.6" height="8.2" fill="#7a7a7a"/><rect x="1.2" y="6.6" width="8.2" height="5.4" fill="#c6c6c6"/><rect x="2.2" y="8.4" width="6.2" height="1.2" fill="#6e6e6e"/><rect x="0.9" y="5.6" width="1" height="1" fill="#fff"/><rect x="8.8" y="5.6" width="1" height="1" fill="#fff"/></svg>
</div>
<div class="row" style="top:248.5px;transform:translateY(0.05px)">
<svg class="ico" style="left:6px;top:1.2px" width="12" height="11" viewBox="0 0 12 11"><rect x="0" y="0" width="1.4" height="1.2" fill="#222"/><rect x="2" y="0" width="1.4" height="1.2" fill="#222"/><rect x="0" y="1.9" width="1.4" height="1.2" fill="#222"/><rect x="2" y="1.9" width="1.4" height="1.2" fill="#222"/><rect x="4.9" y="0.4" width="5.7" height="4" fill="#fff" stroke="#7c7c7c" stroke-width="1.15"/><rect x="0" y="5.4" width="3.2" height="4.9" fill="#c6c6c6"/><rect x="0" y="6.6" width="3.2" height="1" fill="#9c9c9c"/><rect x="0" y="9.2" width="3.2" height="1" fill="#9c9c9c"/><path d="M5.2 6.2 L9.8 10" stroke="#4a4a4a" stroke-width="1.25" fill="none"/><path d="M5 6 L7 9.8 L5 9.8Z" fill="#ccc"/></svg><svg class="ico" style="left:187.5px;top:-0.4px" width="12" height="14" viewBox="0 0 12 14"><path d="M3.4 1.0 L7.4 1.0 L9.6 3.1 L9.6 4.9 L7.4 7.6 L3.3 7.6 L1 4.9 L1 3.1Z" fill="#fbfb34" stroke="#929e14" stroke-width="1.15" stroke-linejoin="round"/><ellipse cx="5" cy="3.6" rx="2.3" ry="1.4" fill="#ffff7c"/><path d="M2.3 7.9 L8.1 7.9 L8.0 11.9 L6.2 12.9 L2.7 11.9Z" fill="#141414"/><rect x="3.4" y="9.8" width="3.4" height="0.8" fill="#8c8c8c"/></svg><svg class="ico" style="left:256.2px;top:1.5px" width="12" height="12" viewBox="0 0 12 12"><circle cx="5.7" cy="5.3" r="4.7" fill="#dde626"/><circle cx="5.7" cy="5.3" r="4.3" fill="none" stroke="#9aa51c" stroke-width="1.2" stroke-dasharray="1.1 1.15"/><circle cx="5.7" cy="5.3" r="2.5" fill="#ffff96"/></svg><svg class="ico" style="left:314px;top:-1.0px" width="11" height="14" viewBox="0 0 11 14"><path d="M3.3 4.1 L3.3 3.4 C3.5 1.1, 8.5 0.9, 8.8 3.8 L8.8 8" stroke="#000" stroke-width="2.1" fill="none"/><rect x="0.2" y="7.5" width="9.7" height="5.8" fill="#000"/><rect x="4.2" y="9.6" width="1.5" height="1.5" fill="#8a8a8a"/></svg>
<div class="c" style="left:66px;letter-spacing:0.62px">WINDOW</div>
<svg class="ico" style="left:372px;top:0" width="22" height="22" viewBox="0 0 22 22"><rect x="1.3" y="1.85" width="18.85" height="18.4" fill="#ffff00" stroke="#262626" stroke-width="1.3"/></svg>
<div class="c lc hi" style="left:394.2px;letter-spacing:-0.28px">yellow</div>
<div class="c lc" style="left:478.6px">Continuous</div>
<div class="c lc" style="left:579.6px;letter-spacing:-0.22px">Default</div>
<div class="c lc" style="left:659px;color:#8c8c8c">Color_2</div>
<svg class="ico" style="left:738px;top:0.3px" width="12" height="14" viewBox="0 0 12 14"><rect x="2.6" y="0.4" width="5.6" height="5.4" fill="#fff" stroke="#b4b4b4" stroke-width="0.8"/><rect x="0" y="5.0" width="10.6" height="8.2" fill="#7a7a7a"/><rect x="1.2" y="6.6" width="8.2" height="5.4" fill="#c6c6c6"/><rect x="2.2" y="8.4" width="6.2" height="1.2" fill="#6e6e6e"/><rect x="0.9" y="5.6" width="1" height="1" fill="#fff"/><rect x="8.8" y="5.6" width="1" height="1" fill="#fff"/></svg>
</div>
<div class="row" style="top:270.5px;transform:translateY(0.28px)">
<svg class="ico" style="left:6px;top:1.2px" width="12" height="11" viewBox="0 0 12 11"><rect x="0" y="0" width="1.4" height="1.2" fill="#222"/><rect x="2" y="0" width="1.4" height="1.2" fill="#222"/><rect x="0" y="1.9" width="1.4" height="1.2" fill="#222"/><rect x="2" y="1.9" width="1.4" height="1.2" fill="#222"/><rect x="4.9" y="0.4" width="5.7" height="4" fill="#fff" stroke="#7c7c7c" stroke-width="1.15"/><rect x="0" y="5.4" width="3.2" height="4.9" fill="#c6c6c6"/><rect x="0" y="6.6" width="3.2" height="1" fill="#9c9c9c"/><rect x="0" y="9.2" width="3.2" height="1" fill="#9c9c9c"/><path d="M5.2 6.2 L9.8 10" stroke="#4a4a4a" stroke-width="1.25" fill="none"/><path d="M5 6 L7 9.8 L5 9.8Z" fill="#ccc"/></svg><svg class="ico" style="left:187.5px;top:-0.4px" width="12" height="14" viewBox="0 0 12 14"><path d="M3.4 1.0 L7.4 1.0 L9.6 3.1 L9.6 4.9 L7.4 7.6 L3.3 7.6 L1 4.9 L1 3.1Z" fill="#fbfb34" stroke="#929e14" stroke-width="1.15" stroke-linejoin="round"/><ellipse cx="5" cy="3.6" rx="2.3" ry="1.4" fill="#ffff7c"/><path d="M2.3 7.9 L8.1 7.9 L8.0 11.9 L6.2 12.9 L2.7 11.9Z" fill="#141414"/><rect x="3.4" y="9.8" width="3.4" height="0.8" fill="#8c8c8c"/></svg><svg class="ico" style="left:256.2px;top:1.5px" width="12" height="12" viewBox="0 0 12 12"><circle cx="5.7" cy="5.3" r="4.7" fill="#dde626"/><circle cx="5.7" cy="5.3" r="4.3" fill="none" stroke="#9aa51c" stroke-width="1.2" stroke-dasharray="1.1 1.15"/><circle cx="5.7" cy="5.3" r="2.5" fill="#ffff96"/></svg><svg class="ico" style="left:314px;top:-1.0px" width="11" height="14" viewBox="0 0 11 14"><path d="M3.3 4.1 L3.3 3.4 C3.5 1.1, 8.5 0.9, 8.8 3.8 L8.8 8" stroke="#000" stroke-width="2.1" fill="none"/><rect x="0.2" y="7.5" width="9.7" height="5.8" fill="#000"/><rect x="4.2" y="9.6" width="1.5" height="1.5" fill="#8a8a8a"/></svg>
<div class="c" style="left:66px;letter-spacing:0.88px">STAIR</div>
<svg class="ico" style="left:372px;top:0" width="22" height="22" viewBox="0 0 22 22"><rect x="1.3" y="1.85" width="18.85" height="18.4" fill="#ffff00" stroke="#262626" stroke-width="1.3"/></svg>
<div class="c lc hi" style="left:394.2px;letter-spacing:-0.28px">yellow</div>
<div class="c lc" style="left:478.6px">Continuous</div>
<div class="c lc" style="left:579.6px;letter-spacing:-0.22px">Default</div>
<div class="c lc" style="left:659px;color:#8c8c8c">Color_2</div>
<svg class="ico" style="left:738px;top:0.3px" width="12" height="14" viewBox="0 0 12 14"><rect x="2.6" y="0.4" width="5.6" height="5.4" fill="#fff" stroke="#b4b4b4" stroke-width="0.8"/><rect x="0" y="5.0" width="10.6" height="8.2" fill="#7a7a7a"/><rect x="1.2" y="6.6" width="8.2" height="5.4" fill="#c6c6c6"/><rect x="2.2" y="8.4" width="6.2" height="1.2" fill="#6e6e6e"/><rect x="0.9" y="5.6" width="1" height="1" fill="#fff"/><rect x="8.8" y="5.6" width="1" height="1" fill="#fff"/></svg>
</div>
<div class="row" style="top:292.5px;transform:translateY(0.52px)">
<svg class="ico" style="left:6px;top:1.2px" width="12" height="11" viewBox="0 0 12 11"><rect x="0" y="0" width="1.4" height="1.2" fill="#222"/><rect x="2" y="0" width="1.4" height="1.2" fill="#222"/><rect x="0" y="1.9" width="1.4" height="1.2" fill="#222"/><rect x="2" y="1.9" width="1.4" height="1.2" fill="#222"/><rect x="4.9" y="0.4" width="5.7" height="4" fill="#fff" stroke="#7c7c7c" stroke-width="1.15"/><rect x="0" y="5.4" width="3.2" height="4.9" fill="#c6c6c6"/><rect x="0" y="6.6" width="3.2" height="1" fill="#9c9c9c"/><rect x="0" y="9.2" width="3.2" height="1" fill="#9c9c9c"/><path d="M5.2 6.2 L9.8 10" stroke="#4a4a4a" stroke-width="1.25" fill="none"/><path d="M5 6 L7 9.8 L5 9.8Z" fill="#ccc"/></svg><svg class="ico" style="left:187.5px;top:-0.4px" width="12" height="14" viewBox="0 0 12 14"><path d="M3.4 1.0 L7.4 1.0 L9.6 3.1 L9.6 4.9 L7.4 7.6 L3.3 7.6 L1 4.9 L1 3.1Z" fill="#fbfb34" stroke="#929e14" stroke-width="1.15" stroke-linejoin="round"/><ellipse cx="5" cy="3.6" rx="2.3" ry="1.4" fill="#ffff7c"/><path d="M2.3 7.9 L8.1 7.9 L8.0 11.9 L6.2 12.9 L2.7 11.9Z" fill="#141414"/><rect x="3.4" y="9.8" width="3.4" height="0.8" fill="#8c8c8c"/></svg><svg class="ico" style="left:256.2px;top:1.5px" width="12" height="12" viewBox="0 0 12 12"><circle cx="5.7" cy="5.3" r="4.7" fill="#dde626"/><circle cx="5.7" cy="5.3" r="4.3" fill="none" stroke="#9aa51c" stroke-width="1.2" stroke-dasharray="1.1 1.15"/><circle cx="5.7" cy="5.3" r="2.5" fill="#ffff96"/></svg><svg class="ico" style="left:314px;top:-1.0px" width="11" height="14" viewBox="0 0 11 14"><path d="M3.3 4.1 L3.3 3.4 C3.5 1.1, 8.5 0.9, 8.8 3.8 L8.8 8" stroke="#000" stroke-width="2.1" fill="none"/><rect x="0.2" y="7.5" width="9.7" height="5.8" fill="#000"/><rect x="4.2" y="9.6" width="1.5" height="1.5" fill="#8a8a8a"/></svg>
<div class="c" style="left:66px;letter-spacing:-0.85px">FUR</div>
<svg class="ico" style="left:372px;top:0" width="22" height="22" viewBox="0 0 22 22"><rect x="1.3" y="1.85" width="18.85" height="18.4" fill="#c0c0c0" stroke="#262626" stroke-width="1.3"/></svg>
<div class="c lc hi" style="left:394.2px">9</div>
<div class="c lc" style="left:478.6px">Continuous</div>
<div class="c lc" style="left:579.6px;letter-spacing:-0.22px">Default</div>
<div class="c lc" style="left:659px;color:#8c8c8c">Color_9</div>
<svg class="ico" style="left:738px;top:0.3px" width="12" height="14" viewBox="0 0 12 14"><rect x="2.6" y="0.4" width="5.6" height="5.4" fill="#fff" stroke="#b4b4b4" stroke-width="0.8"/><rect x="0" y="5.0" width="10.6" height="8.2" fill="#7a7a7a"/><rect x="1.2" y="6.6" width="8.2" height="5.4" fill="#c6c6c6"/><rect x="2.2" y="8.4" width="6.2" height="1.2" fill="#6e6e6e"/><rect x="0.9" y="5.6" width="1" height="1" fill="#fff"/><rect x="8.8" y="5.6" width="1" height="1" fill="#fff"/></svg>
</div>
<div class="row" style="top:314.5px;transform:translateY(0.75px)">
<svg class="ico" style="left:6px;top:1.2px" width="12" height="11" viewBox="0 0 12 11"><rect x="0" y="0" width="1.4" height="1.2" fill="#222"/><rect x="2" y="0" width="1.4" height="1.2" fill="#222"/><rect x="0" y="1.9" width="1.4" height="1.2" fill="#222"/><rect x="2" y="1.9" width="1.4" height="1.2" fill="#222"/><rect x="4.9" y="0.4" width="5.7" height="4" fill="#fff" stroke="#7c7c7c" stroke-width="1.15"/><rect x="0" y="5.4" width="3.2" height="4.9" fill="#c6c6c6"/><rect x="0" y="6.6" width="3.2" height="1" fill="#9c9c9c"/><rect x="0" y="9.2" width="3.2" height="1" fill="#9c9c9c"/><path d="M5.2 6.2 L9.8 10" stroke="#4a4a4a" stroke-width="1.25" fill="none"/><path d="M5 6 L7 9.8 L5 9.8Z" fill="#ccc"/></svg><svg class="ico" style="left:187.5px;top:-0.4px" width="12" height="14" viewBox="0 0 12 14"><path d="M3.4 1.0 L7.4 1.0 L9.6 3.1 L9.6 4.9 L7.4 7.6 L3.3 7.6 L1 4.9 L1 3.1Z" fill="#fbfb34" stroke="#929e14" stroke-width="1.15" stroke-linejoin="round"/><ellipse cx="5" cy="3.6" rx="2.3" ry="1.4" fill="#ffff7c"/><path d="M2.3 7.9 L8.1 7.9 L8.0 11.9 L6.2 12.9 L2.7 11.9Z" fill="#141414"/><rect x="3.4" y="9.8" width="3.4" height="0.8" fill="#8c8c8c"/></svg><svg class="ico" style="left:256.2px;top:1.5px" width="12" height="12" viewBox="0 0 12 12"><circle cx="5.7" cy="5.3" r="4.7" fill="#dde626"/><circle cx="5.7" cy="5.3" r="4.3" fill="none" stroke="#9aa51c" stroke-width="1.2" stroke-dasharray="1.1 1.15"/><circle cx="5.7" cy="5.3" r="2.5" fill="#ffff96"/></svg><svg class="ico" style="left:314px;top:-1.0px" width="11" height="14" viewBox="0 0 11 14"><path d="M3.3 4.1 L3.3 3.4 C3.5 1.1, 8.5 0.9, 8.8 3.8 L8.8 8" stroke="#000" stroke-width="2.1" fill="none"/><rect x="0.2" y="7.5" width="9.7" height="5.8" fill="#000"/><rect x="4.2" y="9.6" width="1.5" height="1.5" fill="#8a8a8a"/></svg>
<div class="c" style="left:66px;letter-spacing:-0.03px">AXIS</div>
<svg class="ico" style="left:372px;top:0" width="22" height="22" viewBox="0 0 22 22"><rect x="1.3" y="1.85" width="18.85" height="18.4" fill="#00ff00" stroke="#262626" stroke-width="1.3"/></svg>
<div class="c lc hi" style="left:394.2px;letter-spacing:-0.18px">green</div>
<div class="c lc" style="left:478.6px">Continuous</div>
<div class="c lc" style="left:579.6px;letter-spacing:-0.22px">Default</div>
<div class="c lc" style="left:659px;color:#8c8c8c">Color_3</div>
<svg class="ico" style="left:738px;top:0.3px" width="12" height="14" viewBox="0 0 12 14"><rect x="2.6" y="0.4" width="5.6" height="5.4" fill="#fff" stroke="#b4b4b4" stroke-width="0.8"/><rect x="0" y="5.0" width="10.6" height="8.2" fill="#7a7a7a"/><rect x="1.2" y="6.6" width="8.2" height="5.4" fill="#c6c6c6"/><rect x="2.2" y="8.4" width="6.2" height="1.2" fill="#6e6e6e"/><rect x="0.9" y="5.6" width="1" height="1" fill="#fff"/><rect x="8.8" y="5.6" width="1" height="1" fill="#fff"/></svg>
</div>
<div class="row" style="top:336.5px;transform:translateY(0.99px)">
<svg class="ico" style="left:6px;top:1.2px" width="12" height="11" viewBox="0 0 12 11"><rect x="0" y="0" width="1.4" height="1.2" fill="#222"/><rect x="2" y="0" width="1.4" height="1.2" fill="#222"/><rect x="0" y="1.9" width="1.4" height="1.2" fill="#222"/><rect x="2" y="1.9" width="1.4" height="1.2" fill="#222"/><rect x="4.9" y="0.4" width="5.7" height="4" fill="#fff" stroke="#7c7c7c" stroke-width="1.15"/><rect x="0" y="5.4" width="3.2" height="4.9" fill="#c6c6c6"/><rect x="0" y="6.6" width="3.2" height="1" fill="#9c9c9c"/><rect x="0" y="9.2" width="3.2" height="1" fill="#9c9c9c"/><path d="M5.2 6.2 L9.8 10" stroke="#4a4a4a" stroke-width="1.25" fill="none"/><path d="M5 6 L7 9.8 L5 9.8Z" fill="#ccc"/></svg><svg class="ico" style="left:187.5px;top:-0.4px" width="12" height="14" viewBox="0 0 12 14"><path d="M3.4 1.0 L7.4 1.0 L9.6 3.1 L9.6 4.9 L7.4 7.6 L3.3 7.6 L1 4.9 L1 3.1Z" fill="#fbfb34" stroke="#929e14" stroke-width="1.15" stroke-linejoin="round"/><ellipse cx="5" cy="3.6" rx="2.3" ry="1.4" fill="#ffff7c"/><path d="M2.3 7.9 L8.1 7.9 L8.0 11.9 L6.2 12.9 L2.7 11.9Z" fill="#141414"/><rect x="3.4" y="9.8" width="3.4" height="0.8" fill="#8c8c8c"/></svg><svg class="ico" style="left:256.2px;top:1.5px" width="12" height="12" viewBox="0 0 12 12"><circle cx="5.7" cy="5.3" r="4.7" fill="#dde626"/><circle cx="5.7" cy="5.3" r="4.3" fill="none" stroke="#9aa51c" stroke-width="1.2" stroke-dasharray="1.1 1.15"/><circle cx="5.7" cy="5.3" r="2.5" fill="#ffff96"/></svg><svg class="ico" style="left:314px;top:-1.0px" width="11" height="14" viewBox="0 0 11 14"><path d="M3.3 4.1 L3.3 3.4 C3.5 1.1, 8.5 0.9, 8.8 3.8 L8.8 8" stroke="#000" stroke-width="2.1" fill="none"/><rect x="0.2" y="7.5" width="9.7" height="5.8" fill="#000"/><rect x="4.2" y="9.6" width="1.5" height="1.5" fill="#8a8a8a"/></svg>
<div class="c" style="left:66px;letter-spacing:-0.18px">COLUMN</div>
<svg class="ico" style="left:372px;top:0" width="22" height="22" viewBox="0 0 22 22"><rect x="1.3" y="1.85" width="18.85" height="18.4" fill="#00ffff" stroke="#262626" stroke-width="1.3"/></svg>
<div class="c lc hi" style="left:394.2px;letter-spacing:-0.8px">cyan</div>
<div class="c lc" style="left:478.6px">Continuous</div>
<div class="c lc" style="left:579.6px;letter-spacing:-0.22px">Default</div>
<div class="c lc" style="left:659px;color:#8c8c8c">Color_4</div>
<svg class="ico" style="left:738px;top:0.3px" width="12" height="14" viewBox="0 0 12 14"><rect x="2.6" y="0.4" width="5.6" height="5.4" fill="#fff" stroke="#b4b4b4" stroke-width="0.8"/><rect x="0" y="5.0" width="10.6" height="8.2" fill="#7a7a7a"/><rect x="1.2" y="6.6" width="8.2" height="5.4" fill="#c6c6c6"/><rect x="2.2" y="8.4" width="6.2" height="1.2" fill="#6e6e6e"/><rect x="0.9" y="5.6" width="1" height="1" fill="#fff"/><rect x="8.8" y="5.6" width="1" height="1" fill="#fff"/></svg>
</div>
<div class="row" style="top:359.5px;transform:translateY(0.22px)">
<svg class="ico" style="left:6px;top:1.2px" width="12" height="11" viewBox="0 0 12 11"><rect x="0" y="0" width="1.4" height="1.2" fill="#222"/><rect x="2" y="0" width="1.4" height="1.2" fill="#222"/><rect x="0" y="1.9" width="1.4" height="1.2" fill="#222"/><rect x="2" y="1.9" width="1.4" height="1.2" fill="#222"/><rect x="4.9" y="0.4" width="5.7" height="4" fill="#fff" stroke="#7c7c7c" stroke-width="1.15"/><rect x="0" y="5.4" width="3.2" height="4.9" fill="#c6c6c6"/><rect x="0" y="6.6" width="3.2" height="1" fill="#9c9c9c"/><rect x="0" y="9.2" width="3.2" height="1" fill="#9c9c9c"/><path d="M5.2 6.2 L9.8 10" stroke="#4a4a4a" stroke-width="1.25" fill="none"/><path d="M5 6 L7 9.8 L5 9.8Z" fill="#ccc"/></svg><svg class="ico" style="left:187.5px;top:-0.4px" width="12" height="14" viewBox="0 0 12 14"><path d="M3.4 1.0 L7.4 1.0 L9.6 3.1 L9.6 4.9 L7.4 7.6 L3.3 7.6 L1 4.9 L1 3.1Z" fill="#fbfb34" stroke="#929e14" stroke-width="1.15" stroke-linejoin="round"/><ellipse cx="5" cy="3.6" rx="2.3" ry="1.4" fill="#ffff7c"/><path d="M2.3 7.9 L8.1 7.9 L8.0 11.9 L6.2 12.9 L2.7 11.9Z" fill="#141414"/><rect x="3.4" y="9.8" width="3.4" height="0.8" fill="#8c8c8c"/></svg><svg class="ico" style="left:256.2px;top:1.5px" width="12" height="12" viewBox="0 0 12 12"><circle cx="5.7" cy="5.3" r="4.7" fill="#dde626"/><circle cx="5.7" cy="5.3" r="4.3" fill="none" stroke="#9aa51c" stroke-width="1.2" stroke-dasharray="1.1 1.15"/><circle cx="5.7" cy="5.3" r="2.5" fill="#ffff96"/></svg><svg class="ico" style="left:314px;top:-1.0px" width="11" height="14" viewBox="0 0 11 14"><path d="M3.3 4.1 L3.3 3.4 C3.5 1.1, 8.5 0.9, 8.8 3.8 L8.8 8" stroke="#000" stroke-width="2.1" fill="none"/><rect x="0.2" y="7.5" width="9.7" height="5.8" fill="#000"/><rect x="4.2" y="9.6" width="1.5" height="1.5" fill="#8a8a8a"/></svg>
<div class="c" style="left:66px">DOOR_FIRE</div>
<svg class="ico" style="left:372px;top:0" width="22" height="22" viewBox="0 0 22 22"><rect x="1.3" y="1.85" width="18.85" height="18.4" fill="#ff00ff" stroke="#262626" stroke-width="1.3"/></svg>
<div class="c lc hi" style="left:394.2px">magenta</div>
<div class="c lc" style="left:478.6px">Continuous</div>
<div class="c lc" style="left:579.6px;letter-spacing:-0.22px">Default</div>
<div class="c lc" style="left:659px;color:#8c8c8c">Color_6</div>
<svg class="ico" style="left:738px;top:0.3px" width="12" height="14" viewBox="0 0 12 14"><rect x="2.6" y="0.4" width="5.6" height="5.4" fill="#fff" stroke="#b4b4b4" stroke-width="0.8"/><rect x="0" y="5.0" width="10.6" height="8.2" fill="#7a7a7a"/><rect x="1.2" y="6.6" width="8.2" height="5.4" fill="#c6c6c6"/><rect x="2.2" y="8.4" width="6.2" height="1.2" fill="#6e6e6e"/><rect x="0.9" y="5.6" width="1" height="1" fill="#fff"/><rect x="8.8" y="5.6" width="1" height="1" fill="#fff"/></svg>
</div>
</div>
<div class="abs" style="left:218px;top:454.2px;width:794px;height:17.4px;background:#dcdcdc"></div>
<div class="abs" style="left:219.2px;top:454.4px;width:18px;height:17.2px;background:#fdfdfd;border:1px solid #d8d8d8"></div>
<div class="abs" style="left:237.2px;top:454.4px;width:652px;height:17.2px;background:#fdfdfd;border-top:1px solid #e4e4e4;border-bottom:1px solid #e4e4e4"></div>
<div class="abs" style="left:995px;top:454.4px;width:17px;height:17.2px;background:#fdfdfd;border-left:1px solid #d8d8d8"></div>
<svg class="abs" style="left:224px;top:457px" width="10" height="12" viewBox="0 0 10 12"><path d="M7.4 1.4 L7.4 10.8 L1 6.1Z" fill="#606060"/></svg>
<svg class="abs" style="left:999px;top:457px" width="10" height="12" viewBox="0 0 10 12"><path d="M1.8 1.8 L1.8 11.2 L8.2 6.5Z" fill="#606060"/></svg>
<div class="abs sunk cjk" style="left:15.6px;top:486px;width:1010px;height:23.4px;line-height:18.6px;font-size:12.7px;padding-left:0.4px;letter-spacing:0.2px">共有95个图层</div>
</body></html>
